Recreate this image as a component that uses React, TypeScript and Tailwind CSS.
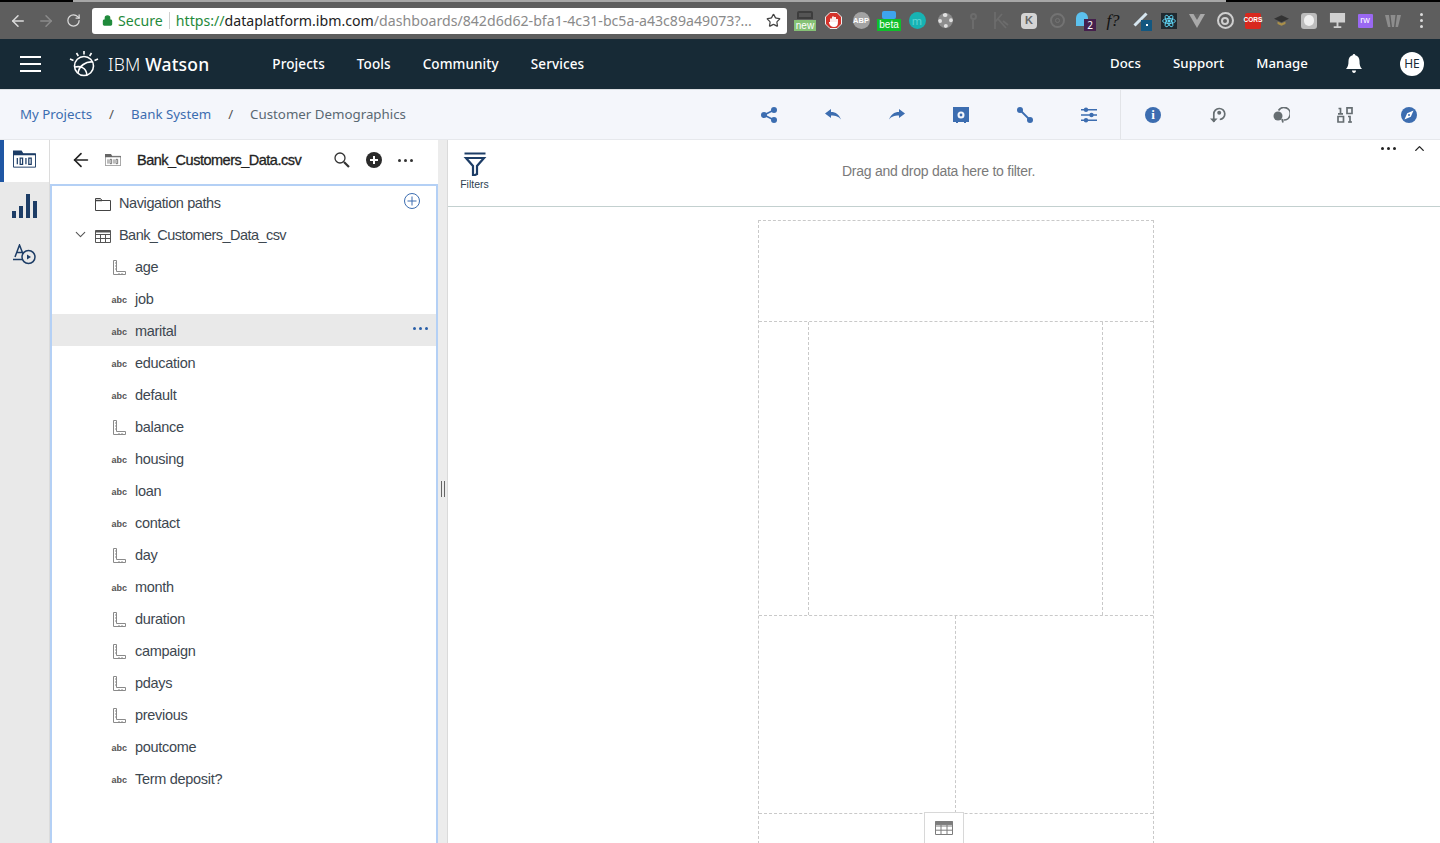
import type { ReactNode } from 'react'
import { ArrowLeft, ArrowRight, ChevronDown, ChevronUp, Lock, RotateCw, Star } from 'lucide-react'

const PLEX = 'font-["Noto_Sans",sans-serif]'
const BLUE = '#3c6db0'
const GREY = '#666e72'

const FIELDS = [
  { name: 'age', kind: 'num' },
  { name: 'job', kind: 'abc' },
  { name: 'marital', kind: 'abc', active: true },
  { name: 'education', kind: 'abc' },
  { name: 'default', kind: 'abc' },
  { name: 'balance', kind: 'num' },
  { name: 'housing', kind: 'abc' },
  { name: 'loan', kind: 'abc' },
  { name: 'contact', kind: 'abc' },
  { name: 'day', kind: 'num' },
  { name: 'month', kind: 'abc' },
  { name: 'duration', kind: 'num' },
  { name: 'campaign', kind: 'num' },
  { name: 'pdays', kind: 'num' },
  { name: 'previous', kind: 'num' },
  { name: 'poutcome', kind: 'abc' },
  { name: 'Term deposit?', kind: 'abc' },
]

function Dots({ className }: { className: string }) {
  return (
    <span className={`flex items-center gap-[3px] ${className}`}>
      <span className="size-[3px] rounded-full bg-current" />
      <span className="size-[3px] rounded-full bg-current" />
      <span className="size-[3px] rounded-full bg-current" />
    </span>
  )
}

function Ruler() {
  return (
    <svg width="14" height="16" viewBox="0 0 14 16" fill="none" stroke="#8a8a8a" strokeWidth="1">
      <path d="M1.500.5h3v11h9v3h-12z" />
      <path d="M3 3h1.500M3 6h1.500M3 9h1.500M7 13v1.500M10 13v1.500" />
    </svg>
  )
}

function DataFolder({ color }: { color: string }) {
  return (
    <svg width="100%" height="100%" viewBox="0 0 24 18" fill="none" stroke={color} strokeWidth="1">
      <path d="M.5 3.500h23v14H.5z" />
      <path d="M0 0h9l2 3.500H24V5H0z" fill={color} stroke="none" />
      <path d="M4.500 8v6.500M7.500 8h2.500v6.500H7.500zM13.500 8v6.500M16.500 8h2.500v6.500h-2.500z" strokeWidth="1.300" />
    </svg>
  )
}

function ExtCell({ children }: { children: ReactNode }) {
  return <span className="relative flex h-[24px] w-[28px] shrink-0 items-center justify-center">{children}</span>
}

function Extensions() {
  return (
    <div className="ml-[4px] flex items-center">
      <ExtCell>
        <span className="absolute left-[6px] top-[2px] h-[8px] w-[16px] rounded-t-[2px] border-2 border-[#3d3d3d] bg-[#555]" />
        <span className="absolute left-[3px] top-[11px] w-[22px] bg-[#86c276] text-center font-['Liberation_Sans',sans-serif] text-[10px] leading-[11px] text-white">new</span>
      </ExtCell>
      <ExtCell>
        <svg width="17" height="17" viewBox="0 0 17 17">
          <path d="M5 .5h7L16.500 5v7L12 16.500H5L.5 12V5z" fill="#d5332b" stroke="#eee" />
          <path d="M6 11.500V6.500M8 11.500V4.500M10 11.500V5M12 11V7M5 11c.5 2 2 3 4 3s3-1 3-3z" stroke="#fff" strokeWidth="1.800" fill="#fff" />
        </svg>
      </ExtCell>
      <ExtCell>
        <span className="flex size-[17px] items-center justify-center rounded-full bg-[#a3a3a3] font-['Liberation_Sans',sans-serif] text-[7.500px] font-bold text-white">ABP</span>
      </ExtCell>
      <ExtCell>
        <span className="absolute left-[7px] top-[2px] h-[8px] w-[14px] rounded-[2px] bg-[#3ea5ee]" />
        <span className="absolute left-[2px] top-[10px] w-[24px] bg-[#0fbf2b] text-center font-['Liberation_Sans',sans-serif] text-[10px] leading-[12px] text-white">beta</span>
      </ExtCell>
      <ExtCell>
        <span className="flex size-[17px] items-center justify-center rounded-full bg-[#17b3b3] text-[11px] leading-none text-[#5fd5d5]">m</span>
      </ExtCell>
      <ExtCell>
        <span className="size-[15px] rounded-full border-[4px] border-dotted border-[#e0e0e0] bg-[#8d8d8d]" />
      </ExtCell>
      <ExtCell>
        <span className="flex flex-col items-center">
          <span className="size-[7px] rounded-full border-2 border-[#6c6c6c]" />
          <span className="h-[9px] w-[2px] bg-[#6c6c6c]" />
        </span>
      </ExtCell>
      <ExtCell>
        <svg width="15" height="17" viewBox="0 0 15 17" fill="none" stroke="#6c6c6c" strokeWidth="1.800">
          <path d="M1 0v17M1 10l7-8M4 7l8 9M9 9l5 4" />
        </svg>
      </ExtCell>
      <ExtCell>
        <span className="flex size-[16px] items-center justify-center rounded-[4px] bg-[#d4d4d4] font-['Liberation_Sans',sans-serif] text-[11px] font-bold leading-none text-[#666]">K</span>
      </ExtCell>
      <ExtCell>
        <span className="flex size-[15px] items-center justify-center rounded-full border-2 border-[#737373]">
          <span className="size-[5px] rounded-full border border-[#737373]" />
        </span>
      </ExtCell>
      <ExtCell>
        <span className="absolute left-[5px] top-[3px] h-[14px] w-[12px] rounded-t-full bg-[#5cc1ee]" />
        <span className="absolute left-[13px] top-[10px] flex h-[12px] w-[12px] items-center justify-center bg-[#45204d] text-[10px] leading-none text-white">2</span>
      </ExtCell>
      <ExtCell>
        <span className="font-['Liberation_Serif',serif] text-[17px] italic leading-none text-[#111]">f?</span>
      </ExtCell>
      <ExtCell>
        <span className="absolute left-[5px] top-[9px] h-[3px] w-[17px] -rotate-45 bg-[#d6e6f0]" />
        <span className="absolute left-[14px] top-[11px] flex h-[11px] w-[11px] items-center justify-center bg-[#135780]">
          <span className="size-[2px] bg-white" />
        </span>
      </ExtCell>
      <ExtCell>
        <span className="flex size-[16px] items-center justify-center bg-[#20292f]">
          <svg width="14" height="14" viewBox="0 0 24 24" fill="none" stroke="#61dafb" strokeWidth="1.500">
            <ellipse cx="12" cy="12" rx="11" ry="4.300" />
            <ellipse cx="12" cy="12" rx="11" ry="4.300" transform="rotate(60 12 12)" />
            <ellipse cx="12" cy="12" rx="11" ry="4.300" transform="rotate(120 12 12)" />
            <circle cx="12" cy="12" r="2" fill="#61dafb" />
          </svg>
        </span>
      </ExtCell>
      <ExtCell>
        <svg width="16" height="14" viewBox="0 0 16 14">
          <path d="M0 0h16L8 14z" fill="#a9a9a9" />
          <path d="M4.500 0h7L8 6z" fill="#666" />
        </svg>
      </ExtCell>
      <ExtCell>
        <span className="flex size-[17px] items-center justify-center rounded-full border-2 border-[#cfcfcf]">
          <span className="size-[8px] rounded-full border-2 border-[#cfcfcf]" />
        </span>
      </ExtCell>
      <ExtCell>
        <span className="flex h-[16px] w-[16px] items-center justify-center rounded-[2px] bg-[#d8281e] font-['Liberation_Sans',sans-serif] text-[6.500px] font-bold leading-none text-white">CORS</span>
      </ExtCell>
      <ExtCell>
        <svg width="15" height="11" viewBox="0 0 17 12">
          <path d="M8.500 0 17 4 8.500 8 0 4z" fill="#333" />
          <path d="M4 7v3l4.500 2L13 10V7L8.500 9z" fill="#a98f4a" />
        </svg>
      </ExtCell>
      <ExtCell>
        <span className="flex size-[16px] items-center justify-center rounded-[3px] bg-[#bcbcbc]">
          <span className="h-[11px] w-[10px] rounded-full bg-[#efefef]" />
        </span>
      </ExtCell>
      <ExtCell>
        <svg width="17" height="17" viewBox="0 0 18 18">
          <path d="M1 1h16v10H1zM8 11h2v4h3v2H5v-2h3z" fill="#d0d0d0" />
        </svg>
      </ExtCell>
      <ExtCell>
        <span className="flex h-[14px] w-[15px] items-center justify-center rounded-[1px] bg-[#9a68f2] font-['Liberation_Sans',sans-serif] text-[9px] leading-none text-white">rw</span>
      </ExtCell>
      <ExtCell>
        <svg width="16" height="12" viewBox="0 0 16 12" fill="#8d8d8d">
          <path d="M0 0h4l1.500 12H3zM5.500 0h5L9 12H7zM12 0h4l-3 12h-2.500z" />
        </svg>
      </ExtCell>
      <ExtCell>
        <span className="flex flex-col gap-[3px]">
          <span className="size-[3px] rounded-full bg-[#dcdcdc]" />
          <span className="size-[3px] rounded-full bg-[#dcdcdc]" />
          <span className="size-[3px] rounded-full bg-[#dcdcdc]" />
        </span>
      </ExtCell>
    </div>
  )
}

function BrowserBar() {
  return (
    <div className="flex h-[39px] shrink-0 flex-col bg-[#5e5e5e]">
      <div className="flex h-[2px] shrink-0 bg-[#a7a7a7]">
        <span className="w-[73px] bg-black" />
        <span className="flex-1" />
        <span className="w-[214px] bg-black" />
      </div>
      <div className="flex flex-1 items-center">
        <ArrowLeft className="ml-[9px] size-[18px] text-[#dcdcdc]" strokeWidth={2} />
        <ArrowRight className="ml-[10px] size-[18px] text-[#8b8b8b]" strokeWidth={2} />
        <RotateCw className="ml-[11px] size-[15px] text-[#dcdcdc]" strokeWidth={2} />
        <div className="ml-[11px] flex h-[26px] w-[695px] shrink-0 items-center rounded-[3px] bg-white pl-[10px] font-['Noto_Sans',sans-serif] text-[14.150px]">
          <Lock className="size-[11px] fill-[#1f8a3b] text-[#1f8a3b]" strokeWidth={2.500} />
          <span className="ml-[5px] text-[#1f8a3b]">Secure</span>
          <span className="mx-[6px] h-[17px] w-px bg-[#d0d0d0]" />
          <span className="whitespace-nowrap">
            <span className="text-[#1f8a3b]">https://</span>
            <span className="text-[#222]">dataplatform.ibm.com</span>
            <span className="text-[#8a8a8a]">/dashboards/842d6d62-bfa1-4c31-bc5a-a43c89a49073?...</span>
          </span>
          <Star className="ml-auto mr-[6px] size-[15px] shrink-0 text-[#444]" strokeWidth={2} />
        </div>
        <Extensions />
      </div>
    </div>
  )
}

function TopNav() {
  return (
    <header className={`flex h-[50px] shrink-0 items-center bg-[#172a36] text-white ${PLEX}`}>
      <span className="ml-[20px] flex w-[21px] flex-col gap-[5px]">
        <span className="h-[2px] bg-white" />
        <span className="h-[2px] bg-white" />
        <span className="h-[2px] bg-white" />
      </span>
      <svg className="ml-[28px]" width="30" height="28" viewBox="0 0 30 28" fill="none" stroke="#fff" strokeWidth="1.600">
        <circle cx="15" cy="16" r="9.500" />
        <path d="M6 17c5-1 11 0 12 8M9 23c1-7 8-12 15-11" />
        <path d="M15 1v3.500M7.500 3l1.800 3M22.500 3l-1.800 3M1 9l3.500 1.500M29 9l-3.500 1.500" />
      </svg>
      <span className="ml-[9px] text-[17.500px] tracking-[0.2px]">
        <span className="font-light">IBM </span>
        <span className="font-medium">Watson</span>
      </span>
      <nav className="ml-[63px] flex gap-[32px] text-[13.500px] font-medium tracking-[0.1px]">
        <span>Projects</span>
        <span>Tools</span>
        <span>Community</span>
        <span>Services</span>
      </nav>
      <nav className="ml-auto flex gap-[32px] text-[13.200px] font-medium tracking-[0.1px]">
        <span>Docs</span>
        <span>Support</span>
        <span>Manage</span>
      </nav>
      <svg className="ml-[38px]" width="16" height="20" viewBox="0 0 16 20" fill="#fff">
        <path d="M8 0c.8 0 1.300.6 1.300 1.300C12 2 13.500 4.300 13.500 7c0 4 .7 6 2.500 8H0c1.800-2 2.500-4 2.500-8 0-2.700 1.500-5 4.200-5.700C6.700.6 7.200 0 8 0z" />
        <path d="M6 16.500h4c0 1.300-.9 2.500-2 2.500s-2-1.200-2-2.500z" />
      </svg>
      <span className="ml-[38px] mr-[16px] flex size-[24px] items-center justify-center rounded-full bg-white text-[12px] text-[#172a36]">HE</span>
    </header>
  )
}

function IconCell({ children }: { children: ReactNode }) {
  return <span className="flex h-full w-[64px] shrink-0 items-center justify-center">{children}</span>
}

function ActionIcons() {
  return (
    <div className="-mr-px flex h-full items-center">
      <IconCell>
        <svg width="16" height="16" viewBox="0 0 16 16" fill={BLUE}>
          <circle cx="3" cy="8" r="3" />
          <circle cx="13" cy="3" r="3" />
          <circle cx="13" cy="13" r="3" />
          <path d="M3 8l10-5M3 8l10 5" stroke={BLUE} strokeWidth="1.600" />
        </svg>
      </IconCell>
      <IconCell>
        <svg width="16" height="11" viewBox="0 0 16 11" fill={BLUE}>
          <path d="M0 4.500 6 0v3c5 0 8 2.500 10 7.500-2.500-3-5-4-10-4V9z" />
        </svg>
      </IconCell>
      <IconCell>
        <svg width="16" height="11" viewBox="0 0 16 11" fill={BLUE}>
          <path d="M16 4.500 10 0v3C5 3 2 5.500 0 10.500c2.500-3 5-4 10-4V9z" />
        </svg>
      </IconCell>
      <IconCell>
        <svg width="16" height="16" viewBox="0 0 16 16" fill={BLUE}>
          <path fillRule="evenodd" d="M0 0h16v15h-3v1h-2v-1H5v1H3v-1H0zm8 4.500a3.500 3.500 0 1 0 0 7 3.500 3.500 0 0 0 0-7z" />
          <circle cx="8" cy="8" r="1.400" />
        </svg>
      </IconCell>
      <IconCell>
        <svg width="16" height="16" viewBox="0 0 16 16" fill={BLUE}>
          <circle cx="3" cy="3" r="3" />
          <circle cx="13" cy="13" r="3" />
          <path d="M3 3l10 10" stroke={BLUE} strokeWidth="1.800" />
        </svg>
      </IconCell>
      <IconCell>
        <svg width="16" height="16" viewBox="0 0 16 16" fill={BLUE}>
          <path d="M0 2h16v1.400H0zM0 7.300h16v1.400H0zM0 12.600h16V14H0z" />
          <circle cx="5" cy="2.700" r="2.200" />
          <circle cx="10.500" cy="8" r="2.200" />
          <circle cx="5" cy="13.300" r="2.200" />
        </svg>
      </IconCell>
    </div>
  )
}

function ToolIcons() {
  return (
    <div className="-mr-px flex h-full items-center border-l border-[#e2e4e8]">
      <IconCell>
        <span className="flex size-[16px] items-center justify-center rounded-full bg-[#3c6db0] font-['Liberation_Serif',serif] text-[13px] font-bold leading-none text-white">i</span>
      </IconCell>
      <IconCell>
        <svg width="17" height="17" viewBox="0 0 17 17" fill="none" stroke={GREY} strokeWidth="1.700">
          <path d="M4.800 8a5.500 5.500 0 1 1 6 5.500" />
          <circle cx="10.200" cy="6.800" r="2" fill={GREY} stroke="none" />
          <path d="M4.800 8v8" />
          <path d="M1 12.500l3.800 4 3.800-4z" fill={GREY} stroke="none" />
        </svg>
      </IconCell>
      <IconCell>
        <svg width="17" height="16" viewBox="0 0 17 16" fill="none" stroke={GREY} strokeWidth="1.700">
          <path d="M5.500 3.500a6.300 6.300 0 1 1 5 9.500" />
          <circle cx="5" cy="9" r="4.500" fill={GREY} stroke="none" />
          <path d="M9 12l1 3.500" />
        </svg>
      </IconCell>
      <IconCell>
        <svg width="16" height="16" viewBox="0 0 16 16" fill="none" stroke={GREY} strokeWidth="1.700">
          <path d="M1.500 1.500h2v5.500M10 .9h5v5.600h-5zM1 9.500h5.500v5.500H1zM11 9.500h2v6" />
          <path d="M1 6.900h5M11 15h4" />
        </svg>
      </IconCell>
      <IconCell>
        <svg width="16" height="16" viewBox="0 0 16 16">
          <circle cx="8" cy="8" r="8" fill={BLUE} />
          <path d="M12.500 3.500 9.800 9.800 3.500 12.500l2.700-6.300z" fill="#fff" />
          <circle cx="8" cy="8" r="1" fill={BLUE} />
        </svg>
      </IconCell>
    </div>
  )
}

function Breadcrumb() {
  return (
    <div className={`flex h-[50px] shrink-0 items-center justify-between border-t border-[#dcdfe3] bg-[#f4f6fb] pl-[20px] text-[13.300px] ${PLEX}`}>
      <div className="flex items-center">
        <span className="text-[#3c6db0]">My Projects</span>
        <span className="mx-[17px] text-[#555]">/</span>
        <span className="text-[#3c6db0]">Bank System</span>
        <span className="mx-[17px] text-[#555]">/</span>
        <span className="text-[#5a6872]">Customer Demographics</span>
      </div>
      <div className="flex h-full items-center">
        <ActionIcons />
        <ToolIcons />
      </div>
    </div>
  )
}

function SideRail() {
  return (
    <div className="flex w-[50px] shrink-0 flex-col items-center border-r border-[#dcdcdc] bg-[#e9e9e9]">
      <div className="flex h-[42px] w-full items-center justify-center border-l-[4px] border-[#1f57a4] bg-white pb-[4px] pr-[4px]">
        <span className="block h-[18px] w-[23px]"><DataFolder color="#1d3d66" /></span>
      </div>
      <svg className="mt-[12px]" width="25" height="24" viewBox="0 0 25 24" fill="#1d3d66">
        <path d="M0 17h4v7H0zM7 12h4v12H7zM14 0h4v24h-4zM21 7h4v17h-4z" />
      </svg>
      <svg className="mt-[26px]" width="23" height="21" viewBox="0 0 23 21" fill="none" stroke="#1d3d66" strokeWidth="1.500">
        <path d="M2 13 6.500 1 10 10M3.500 8.500H9M0 15.500h9" />
        <circle cx="15.500" cy="13" r="6.500" />
        <path d="M14 10.500v5l4-2.500z" fill="#1d3d66" stroke="none" />
      </svg>
    </div>
  )
}

function FieldRow({ name, kind, active }: { name: string; kind: string; active?: boolean }) {
  return (
    <div className={`flex h-[32px] items-center pt-[4px] ${active ? 'bg-[#e9e9e9]' : ''}`}>
      <span className="flex w-[81px] justify-end pr-[6px]">
        {kind === 'num' ? (
          <span className="pr-[1px]"><Ruler /></span>
        ) : (
          <span className="font-['Liberation_Sans',sans-serif] text-[9px] font-bold leading-none text-[#555]">abc</span>
        )}
      </span>
      <span className="ml-[2px] text-[14.500px] tracking-[-0.3px] text-[#3d4750]">{name}</span>
      {active && <Dots className="ml-auto mr-[8px] pb-[8px] text-[#2a5fa8]" />}
    </div>
  )
}

function DataPanel() {
  return (
    <div className="flex w-[388px] shrink-0 flex-col font-['Liberation_Sans',sans-serif]">
      <div className="flex h-[44px] shrink-0 items-center pb-[4px] pl-[20px]">
        <ArrowLeft className="size-[22px] text-[#222]" strokeWidth={1.800} />
        <span className="ml-[13px] block h-[12px] w-[16px]"><DataFolder color="#666" /></span>
        <span className="ml-[16px] mt-[2px] text-[14.500px] tracking-[-0.5px] text-[#222] [-webkit-text-stroke:0.3px_#222]">Bank_Customers_Data.csv</span>
        <svg className="ml-[33px]" width="16" height="16" viewBox="0 0 16 16" fill="none" stroke="#333" strokeWidth="1.300">
          <circle cx="6" cy="6" r="5" />
          <path d="M10 10l5 5" strokeWidth="2.200" />
        </svg>
        <span className="ml-[16px] flex size-[16px] items-center justify-center rounded-full bg-[#2b2b2b] text-white">
          <svg width="10" height="10" viewBox="0 0 10 10" stroke="#fff" strokeWidth="2"><path d="M5 1v8M1 5h8" /></svg>
        </span>
        <Dots className="ml-[16px] text-[#333]" />
      </div>
      <div className="min-h-0 flex-1 overflow-hidden border-x-2 border-t-2 border-[#b4d0f5]">
        <div className="flex h-[32px] items-center pt-[4px]">
          <svg className="ml-[43px]" width="16" height="13" viewBox="0 0 16 13" fill="none" stroke="#444">
            <path d="M.5 12.500V.5h5l1.500 2h8.500v10z" />
            <path d="M.5 2.500h6.500" strokeWidth="1.500" />
          </svg>
          <span className="ml-[8px] text-[14.500px] tracking-[-0.4px] text-[#3d4750]">Navigation paths</span>
          <svg className="ml-auto mr-[16px] mb-[6px]" width="16" height="16" viewBox="0 0 16 16" fill="none" stroke="#3c6db0">
            <circle cx="8" cy="8" r="7.500" />
            <path d="M8 3.500v9M3.500 8h9" />
          </svg>
        </div>
        <div className="flex h-[32px] items-center pt-[4px]">
          <ChevronDown className="ml-[20px] mb-[4px] size-[17px] text-[#555]" strokeWidth={1.500} />
          <svg className="ml-[6px]" width="16" height="13" viewBox="0 0 16 13" fill="none" stroke="#555">
            <path d="M.5.5h15v12H.5zM.5 4.500h15M.5 8.500h15M5.500 4.500v8M10.500 4.500v8" />
            <path d="M.5 1.500h15" strokeWidth="2" />
          </svg>
          <span className="ml-[8px] text-[14.500px] tracking-[-0.55px] text-[#3d4750]">Bank_Customers_Data_csv</span>
        </div>
        {FIELDS.map(f => (
          <FieldRow key={f.name} name={f.name} kind={f.kind} active={f.active} />
        ))}
      </div>
    </div>
  )
}

function CanvasTemplate() {
  return (
    <div className="ml-[310px] mt-[13px] flex w-[396px] shrink-0 flex-col border-x border-t border-dashed border-[#c9c9c9]">
      <div className="h-[101px] border-b border-dashed border-[#c9c9c9]" />
      <div className="flex h-[294px] border-b border-dashed border-[#c9c9c9]">
        <div className="w-[50px] border-r border-dashed border-[#c9c9c9]" />
        <div className="w-[294px] border-r border-dashed border-[#c9c9c9]" />
      </div>
      <div className="flex h-[198px] border-b border-dashed border-[#c9c9c9]">
        <div className="w-[197px] border-r border-dashed border-[#c9c9c9]" />
      </div>
      <div className="relative h-[40px]">
        <span className="absolute -top-[2px] left-[165px] flex h-[31px] w-[40px] items-center justify-center border-x border-t border-[#d8d8d8] bg-white">
          <svg width="18" height="14" viewBox="0 0 18 14" fill="none" stroke="#7c7c7c">
            <path d="M.5.5h17v13H.5zM.5 5h17M.5 9.200h17M6 4v9.500M12 4v9.500" />
            <path d="M0 2.200h18" strokeWidth="3.500" />
          </svg>
        </span>
      </div>
    </div>
  )
}

function ReportArea() {
  return (
    <div className="flex min-w-0 flex-1 flex-col overflow-hidden bg-white">
      <div className="relative flex h-[67px] shrink-0 items-start border-b border-[#c3d0cf] font-['Liberation_Sans',sans-serif]">
        <div className="ml-[12px] mt-[12px] flex w-[29px] flex-col items-center">
          <svg width="24" height="24" viewBox="0 0 24 24" fill="none" stroke="#1d3d66" strokeWidth="2">
            <path d="M1.500 1.500h21" />
            <path d="M3 6h18l-7 8v8l-4 2V14z" strokeWidth="2.200" />
          </svg>
          <span className="mt-[1px] text-[10.500px] text-[#2d3f52]">Filters</span>
        </div>
        <span className="absolute left-[394px] top-[21px] text-[14px] tracking-[-0.25px] text-[#7a7a7a]">Drag and drop data here to filter.</span>
        <Dots className="absolute right-[44px] top-[7px] text-[#222]" />
        <ChevronUp className="absolute right-[13px] top-[1px] size-[15px] text-[#222]" strokeWidth={2.200} />
      </div>
      <CanvasTemplate />
    </div>
  )
}

export default function App() {
  return (
    <div className="flex h-[843px] w-[1440px] flex-col overflow-hidden bg-white">
      <BrowserBar />
      <TopNav />
      <Breadcrumb />
      <div className="flex min-h-0 flex-1 border-t border-[#e6e8ec]">
        <SideRail />
        <DataPanel />
        <div className="relative w-[10px] shrink-0 border-r border-[#dadada] bg-[#ececec]">
          <span className="absolute left-[3px] top-[341px] h-[16px] w-[4px] border-x border-[#666]" />
        </div>
        <ReportArea />
      </div>
    </div>
  )
}
